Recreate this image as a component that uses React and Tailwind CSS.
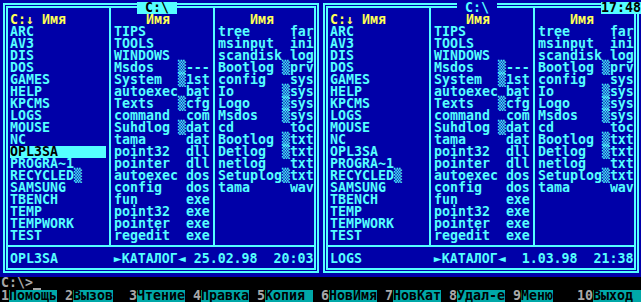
const DIRS = [
  ["ARC"], ["AV3"], ["DIS"], ["DOS"], ["GAMES"], ["HELP"], ["KPCMS"], ["LOGS"],
  ["MOUSE"], ["NC"], ["OPL3SA"], ["PROGRA~1"], ["RECYCLED", "", 1], ["SAMSUNG"],
  ["TBENCH"], ["TEMP"], ["TEMPWORK"], ["TEST"],
];

const FILES_A = [
  ["TIPS"], ["TOOLS"], ["WINDOWS"], ["Msdos", "---", 1], ["System", "1st", 1],
  ["autoexec", "bat"], ["Texts", "cfg", 1], ["command", "com"], ["Suhdlog", "dat", 1],
  ["tama", "dat"], ["point32", "dll"], ["pointer", "dll"], ["autoexec", "dos"],
  ["config", "dos"], ["fun", "exe"], ["point32", "exe"], ["pointer", "exe"], ["regedit", "exe"],
];

const FILES_B = [
  ["tree", "far"], ["msinput", "ini"], ["scandisk", "log"], ["Bootlog", "prv", 1],
  ["config", "sys"], ["Io", "sys", 1], ["Logo", "sys", 1], ["Msdos", "sys", 1],
  ["cd", "toc"], ["Bootlog", "txt", 1], ["Detlog", "txt", 1], ["netlog", "txt"],
  ["Setuplog", "txt", 1], ["tama", "wav"],
];

const KEYS = [
  ["1", "Помощь"], ["2", "Вызов"], ["3", "Чтение"], ["4", "Правка"], ["5", "Копия "],
  ["6", "НовИмя"], ["7", "НовКат"], ["8", "Удал-е"], ["9", "Меню"], ["10", "Выход "],
];

// 8.3 name → "name    ▒ext"
const fmt = ([name, ext = "", hidden]) =>
  name.padEnd(8) + (hidden ? "▒" : " ") + ext.padEnd(3);

function Entries({ header, items, cursor }) {
  return (
    <>
      <div className="h-[12px] w-[96px] whitespace-pre text-[#ffff55]">{header}</div>
      {items.map((it, i) => (
        <div
          key={i}
          className={
            i === cursor
              ? "h-[12px] w-[96px] whitespace-pre bg-[#55ffff] text-black"
              : "h-[12px] w-[96px] whitespace-pre"
          }
        >
          {fmt(it)}
        </div>
      ))}
    </>
  );
}

function Panel({ active, cursor, status }) {
  return (
    <div className="relative w-[320px] h-[277px] pl-[2px] pr-[2px] pt-[3px] pb-[4px]">
      {/* path in the top frame */}
      <div
        className={
          active
            ? "absolute top-[2px] left-[136px] h-[12px] w-[40px] whitespace-pre bg-[#55ffff] text-black"
            : "absolute top-[2px] left-[136px] h-[12px] w-[40px] whitespace-pre bg-[#0000a8] text-[#55ffff]"
        }
      >
        {" C:\\ "}
      </div>

      <div className="h-full border-2 border-[#55ffff] p-[1px]">
        <div className="h-full border-2 border-[#55ffff] flex flex-col">
          <div className="flex h-[239px] border-b-2 border-[#55ffff]">
            <div className="w-[101px] pl-[2px] pt-[6px]">
              <Entries header="C:↓ Имя" items={DIRS} cursor={cursor} />
            </div>
            <div className="w-[104px] border-l-2 border-[#55ffff] pl-[3px] pt-[6px]">
              <Entries header="    Имя" items={FILES_A} />
            </div>
            <div className="w-[101px] border-l-2 border-[#55ffff] pl-[3px] pt-[6px]">
              <Entries header="    Имя" items={FILES_B} />
            </div>
          </div>
          <div className="pl-[2px] pt-[6px] h-[12px] box-content whitespace-pre">
            {status}
          </div>
        </div>
      </div>
    </div>
  );
}

export default function App() {
  return (
    <div className="relative w-[641px] h-[302px] overflow-hidden bg-black font-['DejaVu_Sans_Mono','Liberation_Mono',monospace] text-[13.28px] leading-[12px] font-bold text-[#55ffff]">
      <div className="flex h-[277px] pl-[1px] bg-[#0000a8]">
        <Panel active cursor={10} status="OPL3SA       ►КАТАЛОГ◄ 25.02.98  20:03" />
        <Panel status="LOGS         ►КАТАЛОГ◄  1.03.98  21:38" />
      </div>

      {/* clock */}
      <div className="absolute top-[2px] right-0 h-[12px] w-[40px] bg-[#55ffff] text-black">
        17:48
      </div>

      {/* command line */}
      <div className="flex items-end h-[12px] pl-[1px] text-[#a8a8a8]">
        <span className="whitespace-pre">{"C:\\>"}</span>
        <span className="w-[8px] h-[2px] mb-[-1px] bg-[#a8a8a8]" />
      </div>

      {/* key bar */}
      <div className="flex h-[13px] pt-[1px] pl-[1px]">
        {KEYS.map(([n, label]) => (
          <div key={n} className="flex w-[64px]">
            <span className="text-[#a8a8a8]">{n}</span>
            <span className="whitespace-pre bg-[#00a8a8] text-black">{label}</span>
          </div>
        ))}
      </div>
    </div>
  );
}
